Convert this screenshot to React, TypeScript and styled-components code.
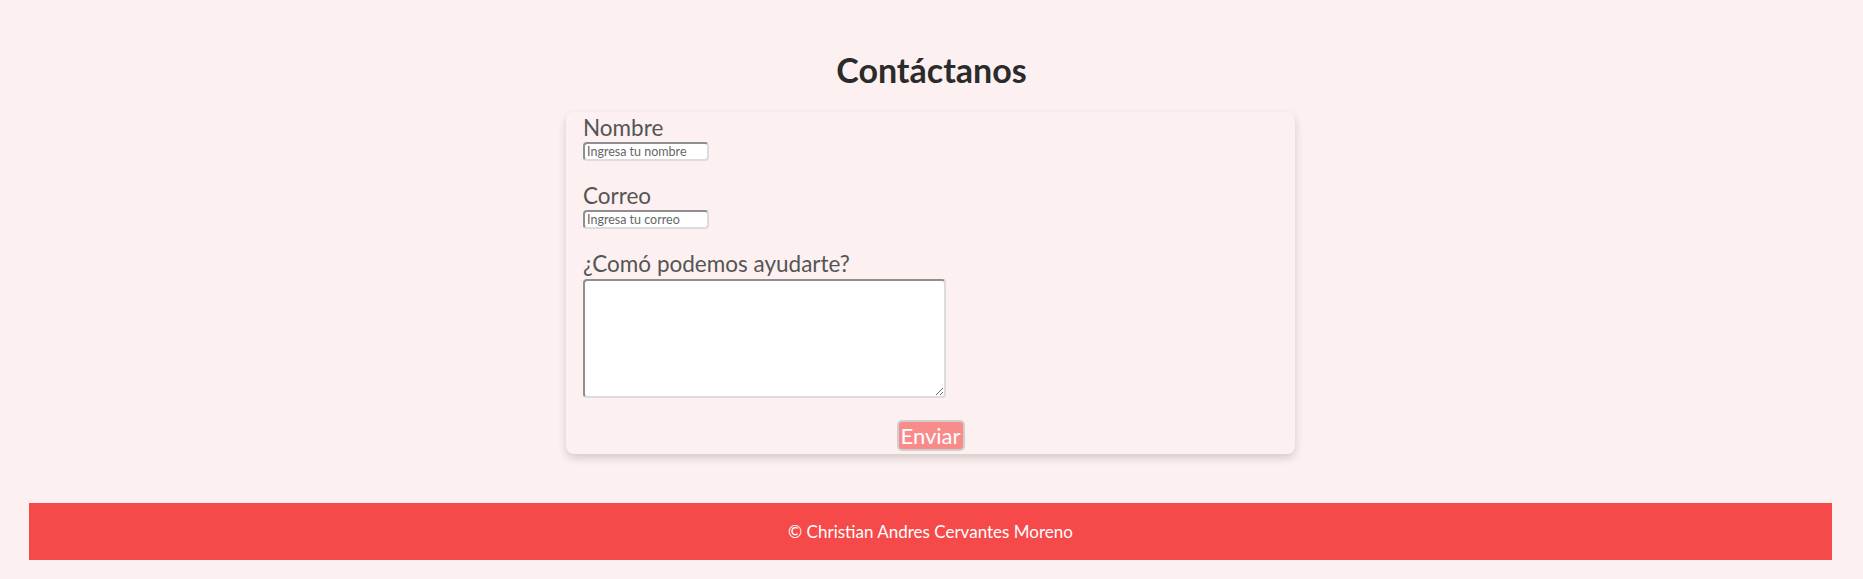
import styled, { createGlobalStyle } from "styled-components";

const Global = createGlobalStyle`
    body {
        margin: 0;
        background-color: #fcf1f0;
        font-family: "Lato", "Open Sans", sans-serif;
    }
`;

const Title = styled.h1`
    margin: 50px 0 0;
    text-align: center;
    font-size: 34px;
    line-height: 39px;
    font-weight: 700;
    color: #2b2b2b;
`;

const Card = styled.form`
    width: 729px;
    box-sizing: border-box;
    margin: 23px 0 0 566px;
    padding: 1px 17px 3px;
    background-color: #fcf1f0;
    border-radius: 8px;
    box-shadow: 0 4px 8px rgba(0, 0, 0, 0.16);
`;

const Group = styled.div<{ $last?: boolean }>`
    margin-bottom: ${(p) => (p.$last ? "0" : "20px")};
`;

const Label = styled.label`
    display: block;
    font-size: 22.5px;
    line-height: 29px;
    color: #555;
`;

const fieldBorder = `
    border-style: solid;
    border-width: 2px;
    border-color: #8f8f8f #dcdcdc #dcdcdc #8f8f8f;
    border-radius: 4px;
    background: #fff;
`;

const Input = styled.input`
    display: block;
    box-sizing: border-box;
    width: 126px;
    height: 19px;
    padding: 0 2px;
    ${fieldBorder}
    font-family: inherit;
    font-size: 12.5px;
    color: #333;
    &::placeholder {
        color: #666;
    }
`;

const Area = styled.textarea`
    display: block;
    box-sizing: border-box;
    width: 363px;
    height: 119px;
    margin-top: 1px;
    ${fieldBorder}
    font-family: inherit;
`;

const Actions = styled.div`
    display: flex;
    justify-content: center;
    margin-top: 22px;
`;

const Send = styled.button`
    box-sizing: border-box;
    width: 68px;
    height: 31px;
    padding: 0;
    border: 2px solid #cfcfcf;
    border-radius: 5px;
    background-color: #f98b8b;
    color: #fff;
    font-family: inherit;
    font-size: 22px;
    line-height: 1;
    cursor: pointer;
`;

const Footer = styled.footer`
    width: 1803px;
    height: 57px;
    margin: 49px 0 19px 29px;
    display: flex;
    align-items: center;
    justify-content: center;
    background-color: #f64949;
    color: #fff;
    font-size: 17px;
`;

function App() {
    return (
        <>
            <Global />
            <Title>Contáctanos</Title>
            <Card onSubmit={(e) => e.preventDefault()}>
                <Group>
                    <Label htmlFor="nombre">Nombre</Label>
                    <Input id="nombre" type="text" placeholder="Ingresa tu nombre" />
                </Group>
                <Group>
                    <Label htmlFor="correo">Correo</Label>
                    <Input id="correo" type="email" placeholder="Ingresa tu correo" />
                </Group>
                <Group $last>
                    <Label htmlFor="mensaje">¿Comó podemos ayudarte?</Label>
                    <Area id="mensaje" />
                </Group>
                <Actions>
                    <Send type="submit">Enviar</Send>
                </Actions>
            </Card>
            <Footer>© Christian Andres Cervantes Moreno</Footer>
        </>
    );
}

export default App;
